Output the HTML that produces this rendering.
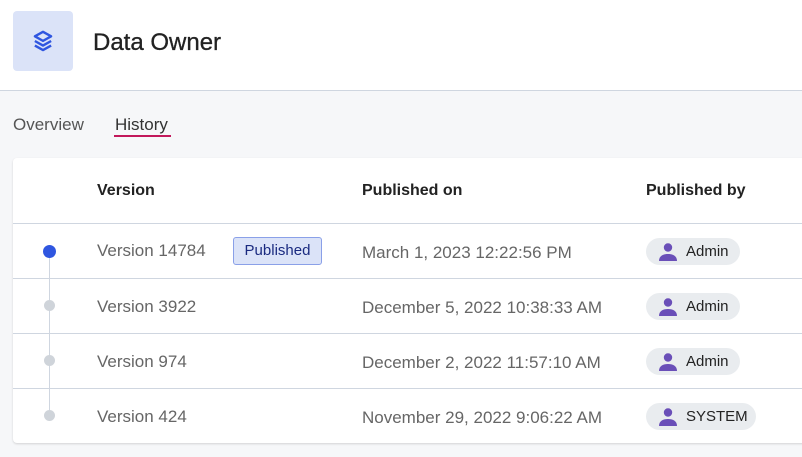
<!DOCTYPE html>
<html><head><style>
*{margin:0;padding:0;box-sizing:border-box}
body{width:802px;height:457px;overflow:hidden;background:#f6f7f9;font-family:"Liberation Sans",sans-serif;position:relative}
.hdr{position:absolute;left:0;top:0;width:802px;height:91px;background:#fff;border-bottom:1px solid #cfd6e0}
.ib{position:absolute;left:13px;top:11px;width:60px;height:60px;background:#dbe3f8;border-radius:4px}
.title{position:absolute;left:93px;top:29px;font-size:24px;color:#222;-webkit-text-stroke:0.3px #222}
.tab{position:absolute;top:115px;font-size:17px}
.card{position:absolute;left:13px;top:158px;width:800px;height:285px;background:#fff;border-radius:4px;box-shadow:0 1px 2px rgba(0,0,0,.15)}
.row{position:absolute;left:0;width:800px;border-top:1px solid #cfd6e0}
.t{position:absolute;font-size:17px;color:#666}
.h{position:absolute;top:182px;font-size:16px;color:#222;font-weight:bold}
.chip{position:absolute;left:646px;height:27px;background:#e9ecef;border-radius:14px;font-size:15px;color:#222;padding:0 0 0 40px;line-height:27px}
.chip svg{position:absolute;left:12px;top:4px}
.dot{position:absolute;border-radius:50%}
</style></head><body>
<div class="hdr">
<div class="ib"><svg style="position:absolute;left:17px;top:17px" width="26" height="26" viewBox="0 0 24 24" fill="none" stroke="#2f56e0" stroke-width="2.2" stroke-linejoin="round"><path d="M12 3.5l7.5 4.2-7.5 4.2-7.5-4.2z"/><path d="M4.5 12l7.5 4.2 7.5-4.2"/><path d="M4.5 16.2l7.5 4.2 7.5-4.2"/></svg></div>
<div class="title">Data Owner</div>
</div>
<div class="tab" style="left:13px;color:#555">Overview</div>
<div class="tab" style="left:115px;color:#333">History</div>
<div style="position:absolute;left:114px;top:135px;width:57px;height:2px;background:#c2185b"></div>
<div class="card"></div>
<div class="h" style="left:97px">Version</div>
<div class="h" style="left:362px">Published on</div>
<div class="h" style="left:646px">Published by</div>
<div class="row" style="top:223px;left:13px"></div>
<div class="row" style="top:278px;left:13px"></div>
<div class="row" style="top:333px;left:13px"></div>
<div class="row" style="top:388px;left:13px"></div>
<div style="position:absolute;left:49px;top:251px;width:1px;height:165px;background:#cfd6e0"></div>
<div class="dot" style="left:43px;top:245px;width:13px;height:13px;background:#2f56e0"></div>
<div class="dot" style="left:44px;top:300px;width:11px;height:11px;background:#cfd4da"></div>
<div class="dot" style="left:44px;top:355px;width:11px;height:11px;background:#cfd4da"></div>
<div class="dot" style="left:44px;top:410px;width:11px;height:11px;background:#cfd4da"></div>
<div class="t" style="left:97px;top:241px">Version 14784</div>
<div style="position:absolute;left:233px;top:237px;width:89px;height:28px;background:#dbe3f8;border:1px solid #8aa0e8;border-radius:3px;font-size:15px;color:#1a2a80;text-align:center;line-height:26px">Published</div>
<div class="t" style="left:97px;top:297px">Version 3922</div>
<div class="t" style="left:97px;top:352px">Version 974</div>
<div class="t" style="left:97px;top:407px">Version 424</div>
<div class="t" style="left:362px;top:243px">March 1, 2023 12:22:56 PM</div>
<div class="t" style="left:362px;top:298px">December 5, 2022 10:38:33 AM</div>
<div class="t" style="left:362px;top:353px">December 2, 2022 11:57:10 AM</div>
<div class="t" style="left:362px;top:408px">November 29, 2022 9:06:22 AM</div>
<div class="chip" style="top:238px;width:94px">Admin<svg width="20" height="20" viewBox="0 0 20 20" fill="#6a4fb8"><circle cx="10" cy="5.5" r="4.2"/><path d="M1 19c0-5 4-7 9-7s9 2 9 7z"/></svg></div>
<div class="chip" style="top:293px;width:94px">Admin<svg width="20" height="20" viewBox="0 0 20 20" fill="#6a4fb8"><circle cx="10" cy="5.5" r="4.2"/><path d="M1 19c0-5 4-7 9-7s9 2 9 7z"/></svg></div>
<div class="chip" style="top:348px;width:94px">Admin<svg width="20" height="20" viewBox="0 0 20 20" fill="#6a4fb8"><circle cx="10" cy="5.5" r="4.2"/><path d="M1 19c0-5 4-7 9-7s9 2 9 7z"/></svg></div>
<div class="chip" style="top:403px;width:110px">SYSTEM<svg width="20" height="20" viewBox="0 0 20 20" fill="#6a4fb8"><circle cx="10" cy="5.5" r="4.2"/><path d="M1 19c0-5 4-7 9-7s9 2 9 7z"/></svg></div>
</body></html>
